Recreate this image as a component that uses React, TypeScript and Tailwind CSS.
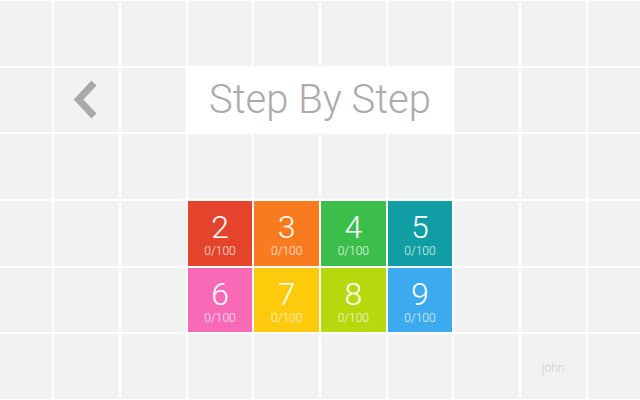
import React from 'react';

const levels = [
  { n: 2, color: 'bg-[#e3442b]' },
  { n: 3, color: 'bg-[#f97b1f]' },
  { n: 4, color: 'bg-[#3cbf4a]' },
  { n: 5, color: 'bg-[#109ea4]' },
  { n: 6, color: 'bg-[#f86ab6]' },
  { n: 7, color: 'bg-[#fdcb0c]' },
  { n: 8, color: 'bg-[#b7d80d]' },
  { n: 9, color: 'bg-[#3eaaee]' },
];

function Cell({ children }: { children?: React.ReactNode }) {
  return <div className="bg-[#f2f2f2] flex items-center justify-center">{children}</div>;
}

function Tile({ n, color }: { n: number; color: string }) {
  return (
    <div className={`${color} flex flex-col items-center pt-[9px] text-white`}>
      <span className="text-[32px] leading-[34px] font-light">{n}</span>
      <span className="text-[12px] leading-[14px] font-light text-white/85">0/100</span>
    </div>
  );
}

function BackArrow() {
  return (
    <svg width="32" height="42" viewBox="0 0 32 42" className="ml-[-2px]">
      <path d="M24 4 L8.5 20.5 L24 37" fill="none" stroke="#a9a9a9" strokeWidth="7" strokeLinejoin="miter" />
    </svg>
  );
}

function empty(count: number, key: string) {
  return Array.from({ length: count }, (_, i) => <Cell key={`${key}-${i}`} />);
}

export default function App() {
  return (
    <div
      className="w-[640px] h-[400px] overflow-hidden bg-white flex justify-center"
      style={{ fontFamily: 'Roboto, "Noto Sans", sans-serif' }}
    >
      <div className="shrink-0 grid grid-cols-[repeat(10,64.67px)] grid-rows-[repeat(6,64.67px)] gap-[2px] pt-[1px]">
        {empty(10, 'r0')}

        <Cell />
        <Cell>
          <BackArrow />
        </Cell>
        <Cell />
        <div className="col-span-4 bg-white flex items-center justify-center">
          <span className="text-[40px] font-light text-[#ababab] leading-none">Step By Step</span>
        </div>
        {empty(3, 'r1')}

        {empty(10, 'r2')}

        {empty(3, 'r3a')}
        {levels.slice(0, 4).map((l) => (
          <Tile key={l.n} {...l} />
        ))}
        {empty(3, 'r3b')}

        {empty(3, 'r4a')}
        {levels.slice(4).map((l) => (
          <Tile key={l.n} {...l} />
        ))}
        {empty(3, 'r4b')}

        {empty(8, 'r5a')}
        <Cell>
          <span className="text-[12px] text-[#cfcfcf] font-light mt-[2px]">john</span>
        </Cell>
        <Cell />
      </div>
    </div>
  );
}
